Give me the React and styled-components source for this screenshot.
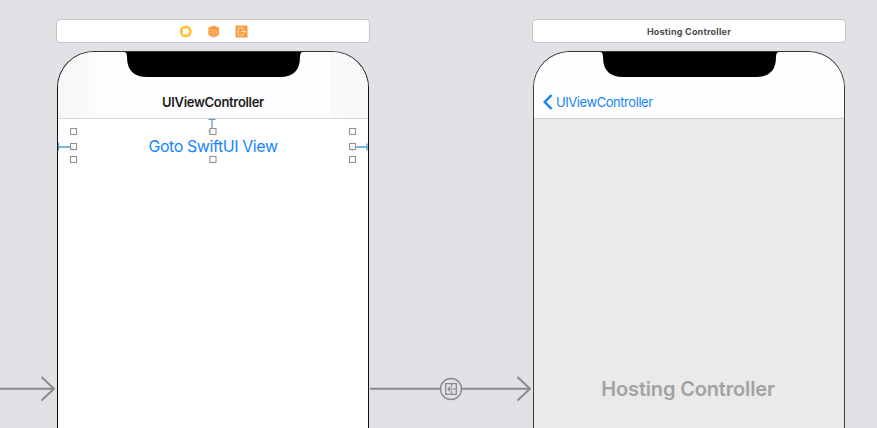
import React from "react";
import styled, { createGlobalStyle } from "styled-components";

const GlobalStyle = createGlobalStyle`
  * { box-sizing: border-box; }
  body { margin: 0; background: #e1e2e6; font-family: Inter, "Liberation Sans", sans-serif; }
`;

const Canvas = styled.main`
  display: grid;
  grid-template-columns: 56px 314px 162px 314px;
  width: 877px;
  height: 428px;
  overflow: hidden;
  background: #e1e2e6;
`;

const Scene = styled.section`
  display: flex;
  flex-direction: column;
  align-items: center;
  padding-top: 19px;
  height: 428px;
  overflow: hidden;
`;

const Dock = styled.header`
  display: flex;
  align-items: center;
  justify-content: center;
  gap: 15px;
  flex: none;
  width: 314px;
  height: 24px;
  border: 1px solid #c3c4c6;
  border-radius: 4px;
  background: #fff;
  color: #4c4c4c;
  font-size: 9px;
  font-weight: 700;
`;

const DockTitle = styled.span`
  padding-top: 1px;
  letter-spacing: 0.21px;
  white-space: nowrap;
`;

const Phone = styled.article`
  position: relative;
  flex: none;
  width: 312px;
  height: 400px;
  margin-top: 8px;
  border: 1px solid ${(p) => p.$edge};
  border-top-color: #333;
  border-radius: 37px 37px 0 0;
  background: ${(p) => p.$fill};
  overflow: hidden;
`;

const Notch = styled.svg`
  position: absolute;
  top: 0;
  left: 64px;
  width: 182px;
  height: 26px;
  display: block;
`;

const NavBar = styled.nav`
  display: flex;
  align-items: flex-start;
  justify-content: ${(p) => (p.$back ? "flex-start" : "center")};
  height: 67px;
  padding: 41px 0 0 ${(p) => (p.$back ? "8px" : "0")};
  border-bottom: 1px solid ${(p) => (p.$back ? "#cbcbcb" : "#d8d8d8")};
  background: ${(p) =>
    p.$back
      ? "#fefefe"
      : "linear-gradient(90deg, #f7f7f7 0, #fafafa 34px, #fefefe 46px, #fefefe 272px, #f9f9f9 273px, #f8f8f8 100%)"};
`;

const NavTitle = styled.h1`
  margin: 0;
  color: #1b1b1d;
  font-size: 13px;
  font-weight: 600;
  line-height: 18px;
  letter-spacing: -0.32px;
  white-space: nowrap;
`;

const BackLink = styled.a`
  display: flex;
  align-items: center;
  gap: 3px;
  height: 18px;
  color: #1585fc;
  font-size: 13px;
  line-height: 18px;
  letter-spacing: -0.44px;
  white-space: nowrap;
`;

const BackChevron = styled.svg`
  display: block;
  width: 11px;
  height: 16px;
  flex: none;
`;

const ButtonArea = styled.div`
  display: flex;
  justify-content: center;
  margin: 12px 15px 0;
  height: 29px;
`;

const LinkButton = styled.button`
  border: 0;
  padding: 0;
  background: transparent;
  color: #1585fc;
  font: 400 16px/30px Inter, "Liberation Sans", sans-serif;
  letter-spacing: -0.42px;
  white-space: nowrap;
`;

const SelectionOverlay = styled.svg`
  position: absolute;
  left: -1px;
  top: 66px;
  width: 312px;
  height: 50px;
`;

const Placeholder = styled.p`
  margin: 255px 0 0;
  padding-right: 2px;
  color: #a2a2a2;
  font-size: 20px;
  font-weight: 600;
  line-height: 30px;
  letter-spacing: -0.16px;
  text-align: center;
  white-space: nowrap;
`;

const Connection = styled.svg`
  display: block;
  width: 100%;
  height: 28px;
  margin-top: 375px;
  fill: none;
  stroke: #8a8a8b;
  stroke-width: 2;
`;

const DockIcon = styled.svg`
  width: 13px;
  height: 13px;
  flex: none;
`;

function PhoneNotch() {
  return (
    <Notch viewBox="0 0 182 26">
      <path d="M2 0 H181 Q178 0 178 5 Q178 25 158 25 H25 Q5 25 5 5 Q5 0 2 0Z" />
    </Notch>
  );
}

function DockIcons() {
  return (
    <>
      <DockIcon viewBox="0 0 13 13">
        <circle cx="6.7" cy="6.5" r="6" fill="#ffc233" />
        <rect x="3.8" y="3.6" width="5.8" height="5.8" rx=".8" fill="#fff" />
      </DockIcon>
      <DockIcon viewBox="0 0 13 13">
        <path d="M6.7 .5 L12 2.8 V9.9 L6.7 12.6 L1.4 9.9 V2.8Z" fill="#fa9b3e" />
        <path d="M3.5 4.5 L6.7 6 L10 4.5 M6.7 6 V11 M4 6.5 V9 M9.5 6.5 V9" fill="none" stroke="#ffc48a" strokeWidth=".9" />
      </DockIcon>
      <DockIcon viewBox="0 0 13 13">
        <rect x=".5" y=".5" width="12" height="12" fill="#fa9b3e" />
        <path d="M8.5 4.5 V3 H3.2 V10 H8.5 V8.5 M6 6.5 H10.5 M9 5 L10.7 6.5 L9 8" fill="none" stroke="#ffd9b0" strokeWidth="1" />
      </DockIcon>
    </>
  );
}

const handles = [
  [16.5, 13], [16.5, 28], [16.5, 41],
  [156, 13], [156, 41],
  [295.5, 13], [295.5, 28], [295.5, 41],
];

function Selection() {
  return (
    <SelectionOverlay viewBox="0 0 312 50">
      <path
        d="M1.5 24.5 V32.5 M1.5 29 H16 M16 28 V32.5 M151.5 1.3 H158.5 M155 1.5 V13 M151.5 13 H156 M295 29 H310 M310 25.5 V32.5 M295.5 28 V32.5"
        fill="none"
        stroke="#559fd2"
        strokeWidth="1.3"
      />
      {handles.map(([x, y]) => (
        <rect key={`${x}-${y}`} x={x - 3} y={y - 2.5} width="6" height="6" fill="#fff" fillOpacity=".85" stroke="#929292" strokeWidth="1.1" />
      ))}
    </SelectionOverlay>
  );
}

export default function App() {
  return (
    <>
      <GlobalStyle />
      <Canvas>
        <Connection viewBox="0 0 56 28">
          <path d="M0 13.7 H54 M41.5 2 L54 13.7 L41.5 25.5" />
        </Connection>
        <Scene>
          <Dock><DockIcons /></Dock>
          <Phone $fill="#fff" $edge="#111">
            <NavBar><NavTitle>UIViewController</NavTitle></NavBar>
            <PhoneNotch />
            <ButtonArea><LinkButton>Goto SwiftUI View</LinkButton></ButtonArea>
            <Selection />
          </Phone>
        </Scene>
        <Connection viewBox="0 0 162 28">
          <path d="M0 13.7 H70 M92 13.7 H160 M147.5 2 L160 13.7 L147.5 25.5" />
          <circle cx="81" cy="14" r="10.5" strokeWidth="1.4" />
          <path d="M75.7 8.7 H86.3 V19.3 H75.7Z" strokeWidth="1.3" />
          <path d="M81.5 9 V12.3 M81.5 15.7 V19 M77.7 14 H86 M80 12 L78 14 L80 16" strokeWidth="1.2" />
        </Connection>
        <Scene>
          <Dock><DockTitle>Hosting Controller</DockTitle></Dock>
          <Phone $fill="#eaeaea" $edge="#3c3c3c">
            <NavBar $back>
              <BackLink>
                <BackChevron viewBox="0 0 11 16" fill="none">
                  <path d="M9.6 1 L2.8 8 L9.6 15" stroke="#1585fc" strokeWidth="2.5" />
                </BackChevron>
                UIViewController
              </BackLink>
            </NavBar>
            <PhoneNotch />
            <Placeholder>Hosting Controller</Placeholder>
          </Phone>
        </Scene>
      </Canvas>
    </>
  );
}
